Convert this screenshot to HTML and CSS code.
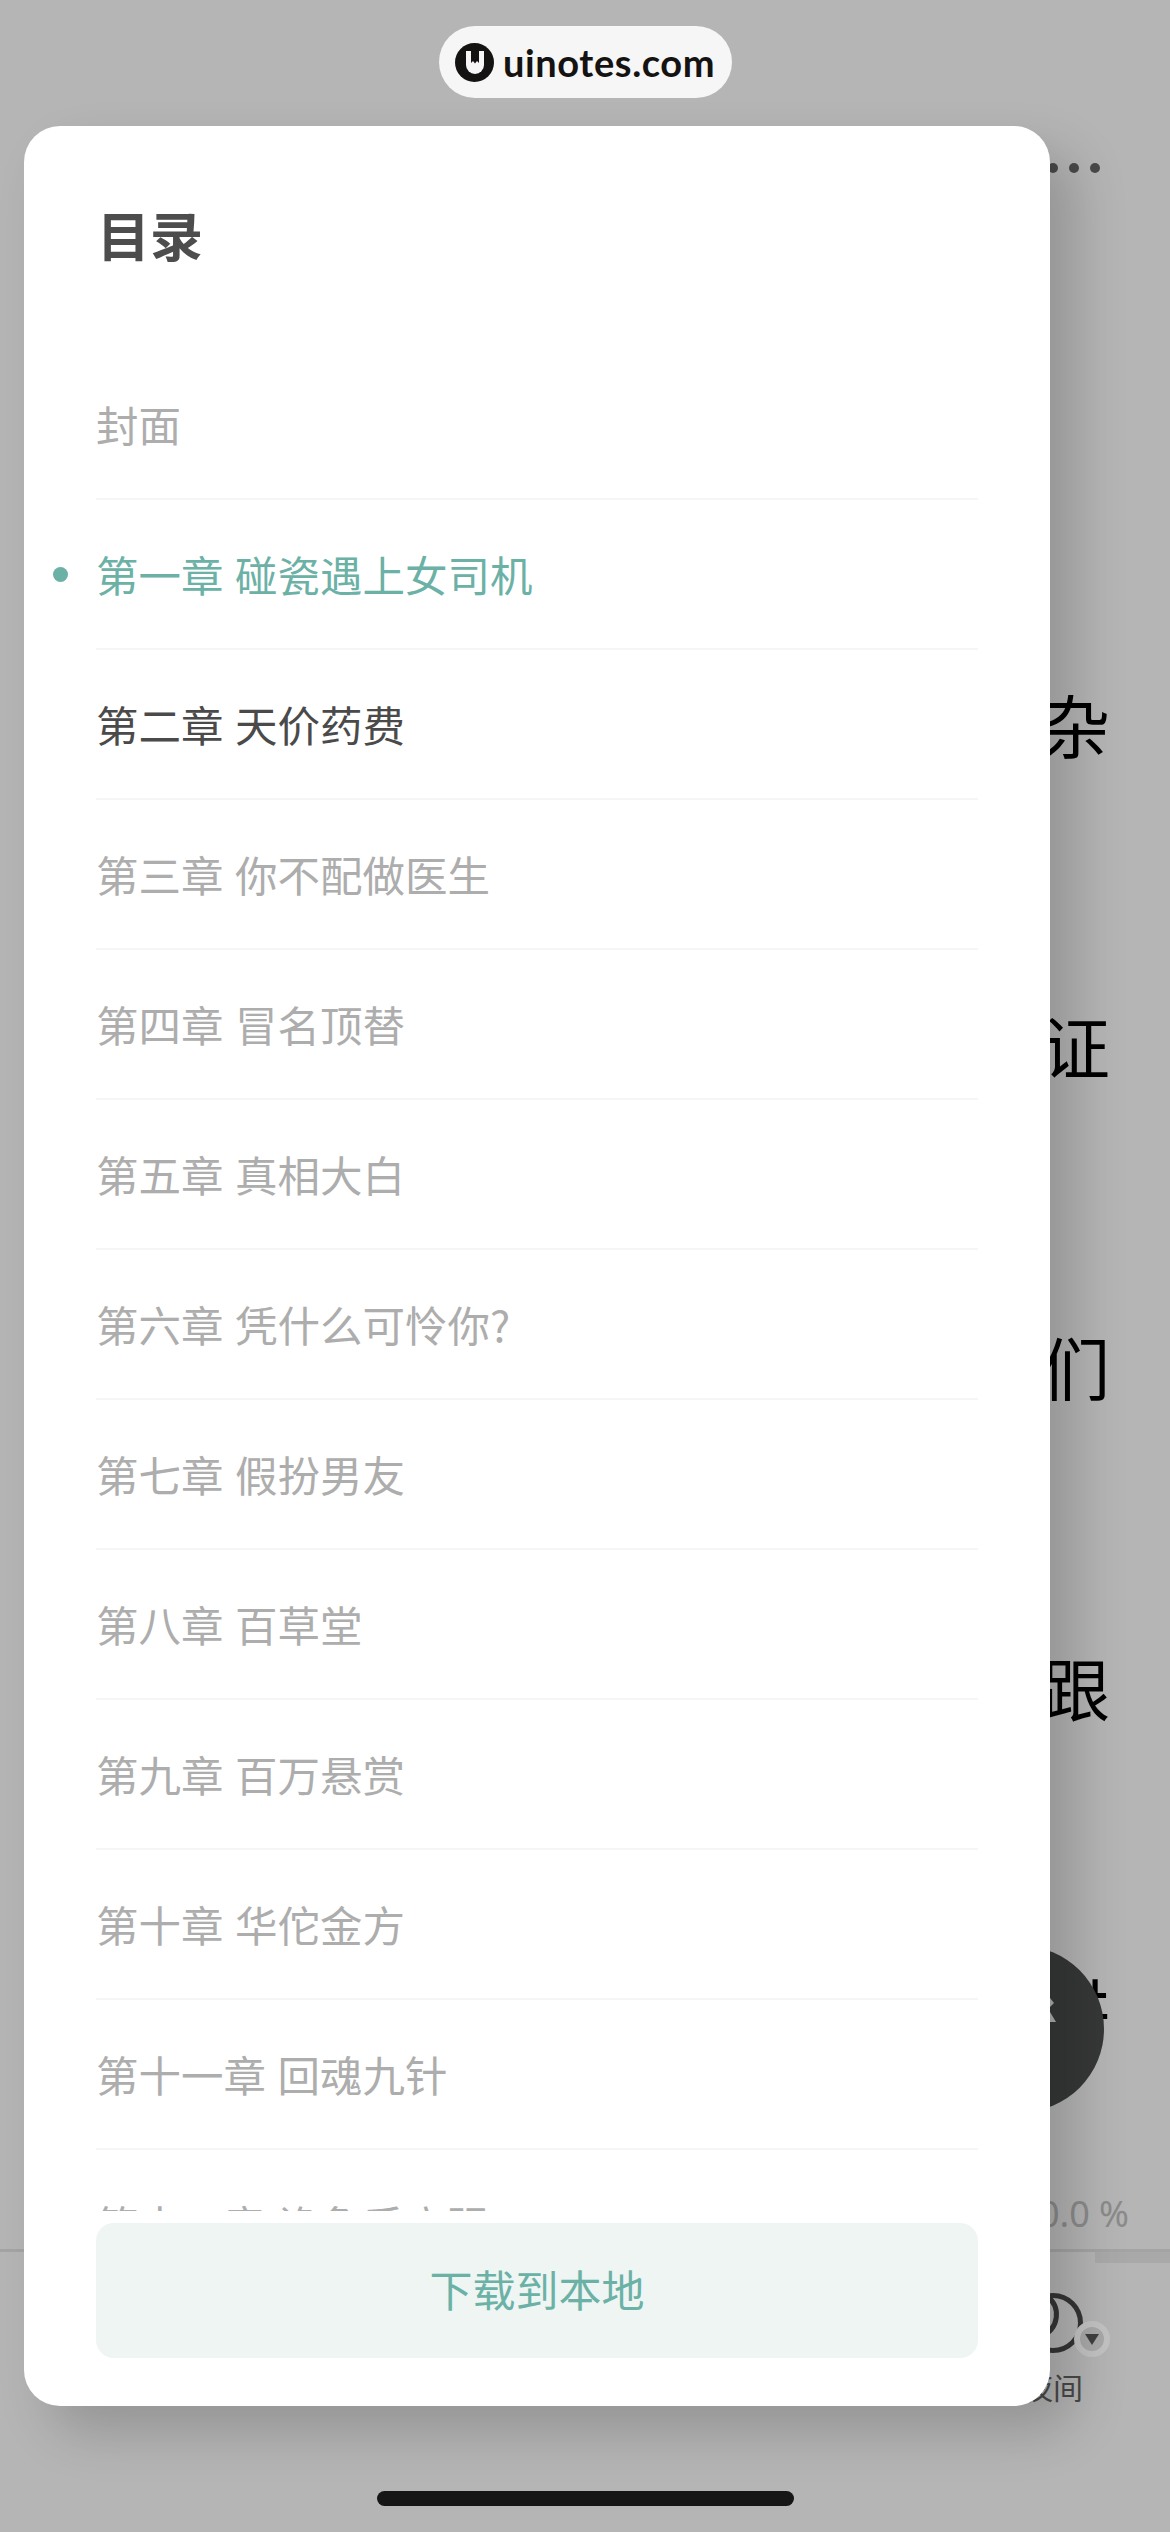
FILE: index.html
```html
<!DOCTYPE html>
<html lang="zh-CN">
<head>
<meta charset="utf-8">
<title>目录</title>
<link rel="stylesheet" href="styles.css">
</head>
<body>
<div class="page">
  <main class="reader">
    <div class="reader-top">
      <span class="dot"></span><span class="dot"></span><span class="dot"></span>
    </div>
    <div class="reader-text">
      <p>杂</p>
      <p>证</p>
      <p>们</p>
      <p>跟</p>
      <p>讲</p>
    </div>
    <div class="progress">0.0 %</div>
    <div class="rule"><span class="rule-thumb"></span></div>
    <nav class="tabbar">
      <div class="tab">
        <svg class="tab-icon" viewBox="0 0 60 60" width="60" height="60" aria-hidden="true">
          <circle cx="30" cy="30" r="27.5" fill="none" stroke="#4b4b4b" stroke-width="5"/>
          <path d="M24 3 C38 14 37 36 17 44" fill="none" stroke="#4b4b4b" stroke-width="5"/>
        </svg>
        <span class="tab-label">夜间</span>
        <span class="tab-badge">
          <svg viewBox="0 0 14 11" width="14" height="11" aria-hidden="true"><path d="M0 0H14L7 11Z" fill="#3f3f3f"/></svg>
        </span>
      </div>
    </nav>
    <div class="home-indicator"></div>
    <div class="fab">
      <svg class="fab-glyph" viewBox="0 0 8 26" width="8" height="26" aria-hidden="true">
        <path d="M0 0L4 5L0 9Z M0 14L6 24H0Z" fill="#f8f8f8"/>
      </svg>
    </div>
  </main>

  <div class="scrim"></div>

  <div class="badge-link">
    <svg class="badge-logo" viewBox="0 0 39 39" width="39" height="39" aria-hidden="true">
      <circle cx="19.5" cy="19.5" r="19.5" fill="#151212"/>
      <path d="M11 8H29V22A9 9 0 0 1 11 22Z" fill="#f6f6f6"/>
      <path d="M16 6V20L18 18L20 20.5L22 18L24 20V6Z" fill="#151212"/>
    </svg>
    <span class="badge-text">uinotes.com</span>
  </div>

  <aside class="drawer">
    <h1 class="drawer-title">目录</h1>
    <ul class="toc">
      <li class="toc-item">封面</li>
      <li class="toc-item is-current">第一章 碰瓷遇上女司机</li>
      <li class="toc-item is-read">第二章 天价药费</li>
      <li class="toc-item">第三章 你不配做医生</li>
      <li class="toc-item">第四章 冒名顶替</li>
      <li class="toc-item">第五章 真相大白</li>
      <li class="toc-item">第六章 凭什么可怜你?</li>
      <li class="toc-item">第七章 假扮男友</li>
      <li class="toc-item">第八章 百草堂</li>
      <li class="toc-item">第九章 百万悬赏</li>
      <li class="toc-item">第十章 华佗金方</li>
      <li class="toc-item">第十一章 回魂九针</li>
      <li class="toc-item">第十二章 诡象手高强</li>
    </ul>
    <div class="drawer-foot">
      <button class="download" type="button">下载到本地</button>
    </div>
  </aside>
</div>
</body>
</html>
```

FILE: styles.css
```css
* { box-sizing: border-box; }
html, body { margin: 0; padding: 0; }
body {
  width: 1170px;
  height: 2532px;
  overflow: hidden;
  font-family: "Noto Sans CJK SC", "Noto Sans", sans-serif;
}
.page {
  position: relative;
  width: 1170px;
  height: 2532px;
  overflow: hidden;
  background: #fff;
}
.reader {
  display: flex;
  flex-direction: column;
  height: 100%;
}
.reader-top {
  display: flex;
  justify-content: flex-end;
  gap: 11px;
  padding: 163px 70px 0 0;
}
.dot {
  width: 10px;
  height: 10px;
  border-radius: 50%;
  background: #686868;
}
.reader-text {
  display: flex;
  flex-direction: column;
  align-items: flex-end;
  margin-top: 390px;
  padding-right: 60px;
  color: #000;
  font-size: 68px;
  font-weight: 400;
}
.reader-text p {
  margin: 0;
  height: 321px;
  line-height: 321px;
}
.progress {
  height: 81px;
  padding: 9px 41px 0 0;
  display: flex;
  align-items: center;
  justify-content: flex-end;
  font-family: "Noto Sans", sans-serif;
  font-weight: 400;
  font-size: 36px;
  color: #c4c4c4;
}
.rule {
  height: 14px;
  border-top: 3px solid #e8e8e8;
  display: flex;
  justify-content: flex-end;
}
.rule-thumb {
  width: 75px;
  background: #eeeeee;
}
.tabbar {
  display: flex;
  justify-content: flex-end;
  padding: 30px 87px 0 0;
}
.tab {
  position: relative;
  display: flex;
  flex-direction: column;
  align-items: center;
}
.tab-icon { display: block; }
.tab-label {
  margin-top: 15px;
  font-size: 30px;
  line-height: 36px;
  font-weight: 400;
  color: #686868;
}
.tab-badge {
  position: absolute;
  z-index: 2;
  left: 51px;
  top: 28px;
  width: 36px;
  height: 36px;
  border-radius: 50%;
  background: #a9a9a9;
  border: 6px solid #c3c3c3;
  display: flex;
  align-items: center;
  justify-content: center;
}
.home-indicator {
  width: 417px;
  height: 15px;
  margin: 87px auto 0 377px;
  border-radius: 8px;
  background: #202020;
}
.fab {
  position: absolute;
  left: 938px;
  top: 1946px;
  width: 166px;
  height: 166px;
  border-radius: 50%;
  background: #4d4f4e;
}
.fab-glyph {
  position: absolute;
  left: 112px;
  top: 52px;
}
.scrim {
  position: absolute;
  z-index: 1;
  inset: 0;
  background: rgba(0, 0, 0, 0.29);
}
.badge-link {
  position: absolute;
  z-index: 3;
  left: 439px;
  top: 26px;
  width: 293px;
  height: 72px;
  border-radius: 36px;
  background: #f6f6f6;
  display: flex;
  align-items: center;
  gap: 9px;
  padding-left: 16px;
}
.badge-logo { display: block; flex: none; }
.badge-text {
  font-family: "Lato", sans-serif;
  font-weight: 700;
  font-size: 38px;
  letter-spacing: 0.6px;
  color: #151212;
}
.drawer {
  position: absolute;
  z-index: 3;
  left: 24px;
  top: 126px;
  width: 1026px;
  height: 2280px;
  border-radius: 36px;
  background: #fff;
  box-shadow: 26px 26px 52px rgba(0, 0, 0, 0.18);
  display: flex;
  flex-direction: column;
  padding: 0 72px;
}
.drawer-title {
  margin: 0;
  height: 224px;
  padding: 70px 0 0 1px;
  font-size: 53px;
  line-height: 76px;
  font-weight: 700;
  color: #4d4d4d;
}
.toc {
  list-style: none;
  margin: 0 0 0 -72px;
  padding: 0 0 0 72px;
  flex: 1;
  min-height: 0;
  overflow: hidden;
}
.toc-item {
  position: relative;
  height: 150px;
  padding-bottom: 1px;
  display: flex;
  align-items: center;
  border-bottom: 2px solid #f6f6f6;
  font-size: 42.5px;
  font-weight: 400;
  word-spacing: 2px;
  color: #adadad;
}
.toc-item.is-read { color: #4a4a4a; }
.toc-item.is-current { color: #6bb1a6; }
.toc-item.is-current::before {
  content: "";
  position: absolute;
  left: -43px;
  top: 67px;
  width: 15px;
  height: 15px;
  border-radius: 50%;
  background: #6bb1a6;
}
.drawer-foot {
  flex: none;
  padding: 12px 0 48px;
  background: #fff;
}
.download {
  display: block;
  width: 100%;
  height: 135px;
  padding: 0 0 6px;
  border: 0;
  border-radius: 18px;
  background: #eef5f3;
  font-family: inherit;
  font-size: 43px;
  font-weight: 400;
  color: #6bb1a6;
}
```
